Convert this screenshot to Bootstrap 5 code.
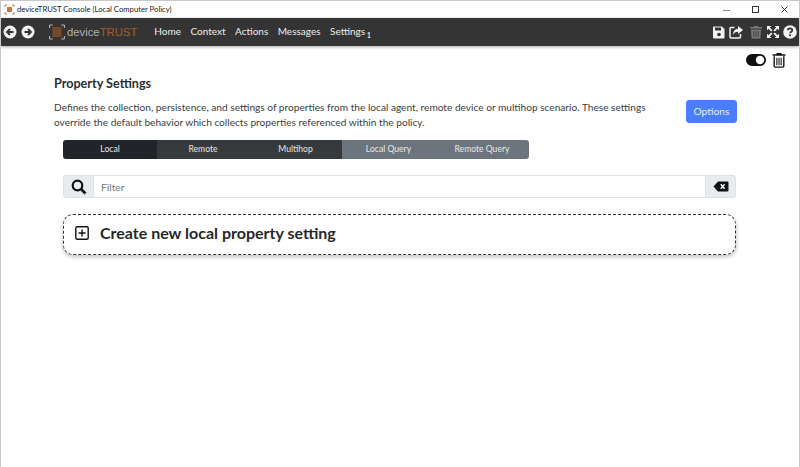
<!DOCTYPE html>
<html lang="en">
<head>
<meta charset="utf-8">
<title>deviceTRUST Console</title>
<link href="https://cdn.jsdelivr.net/npm/bootstrap@5.3.0/dist/css/bootstrap.min.css" rel="stylesheet">
<style>
html,body{height:467px;overflow:hidden;background:#fff}
body{font-family:Lato,"Open Sans",sans-serif;color:#212529;border-left:1px solid #c9c9c9;border-right:1px solid #c9c9c9}
.win-bar{height:18px;font-size:7.700px;line-height:17px;color:#222;padding-left:3px;border-top:1px solid #c9c9c9}
.win-bar .ttl{margin-left:2px}
.win-btn{width:29px;height:17px}
.top-bar{height:28px;background:#343434;box-shadow:0 1px 3px rgba(0,0,0,.35);padding-left:2px;padding-right:2px}
.back-btn{width:14px;height:14px;display:block}
.back-next{margin-left:4px}
.brand-box{margin-left:14px}
.brand-txt{font-size:11.300px;color:#b3b3b3;font-family:"Liberation Sans",sans-serif;margin-left:2px}
.brand-txt b{color:#a4602a;font-weight:400}
.menu-row{margin-left:17px;column-gap:9.500px}
.menu-link{color:#eee;font-size:10px;line-height:28px;text-decoration:none}
.menu-sub{font-size:6.500px;color:#eee;font-weight:700;position:relative;top:3px;margin-left:2px}
.tool-ic{width:14px;height:14px;display:block}
.tool-gap{margin-left:3px}
.tools{gap:3px}
.page-wrap{height:421px}
.corner-tools{padding:5px 13px 0 0;height:23px;gap:6px}
.head-ttl{font-size:12.600px;font-weight:700;margin:0;line-height:17px;color:#2b2f33}
.head-block{padding:6px 62px 0 53px}
.head-row{margin-top:6px}
.desc{font-size:10.150px;line-height:15px;color:#3a3e42;margin:2px 0 0;width:600px}
.opt-btn{font-size:10.200px;background:#4a7dfb;border:1px solid #4a7dfb;color:#e8eeff;height:23px;width:51px;padding:0;border-radius:3px;margin-top:-5px}
.seg-row{margin:10px 0 0 62px;width:466px;height:19px;font-size:8.600px;color:#e8e8e8;border-radius:3px;overflow:hidden}
.seg{display:flex;align-items:center;justify-content:center;height:100%}
.seg-1{width:94px;background:#212529}
.seg-2{width:92px;background:#373a3c}
.seg-3{width:93px;background:#373a3c}
.seg-4{width:93px;background:#6c757d}
.seg-5{width:94px;background:#6c757d}
.filter-wrap.input-group{margin:16px 63px 0 62px;height:23px;width:auto}
.filter-wrap .input-group-text{background:#e9ecef;border-color:#dee2e6;padding:0;justify-content:center;border-radius:3px}
.filter-l{width:31px;border-top-right-radius:0!important;border-bottom-right-radius:0!important}
.filter-r{width:31px;border-top-left-radius:0!important;border-bottom-left-radius:0!important}
.filter-in{font-size:10.300px;height:23px;min-height:23px;padding:0 7px;border-color:#dee2e6;border-radius:0}
.filter-in::placeholder{color:#6f757b}
.new-card{margin:16px 63px 0 62px;height:41px;border:1px dashed #333;border-radius:10px;box-shadow:0 2px 4px rgba(0,0,0,.25);padding:0 0 4px 11px;gap:11px;background:#fff}
.new-card span{font-size:16px;font-weight:700;color:#26292c}
</style>
</head>
<body>
<div class="win-bar d-flex align-items-center justify-content-between">
  <div class="d-flex align-items-center">
    <svg width="11" height="11" viewBox="0 0 11 11"><rect x="3" y="3" width="5" height="5" fill="#c87a3c"/><path d="M1 3V1h2M8 1h2v2M10 8v2H8M3 10H1V8" fill="none" stroke="#c0673a" stroke-width=".9"/></svg>
    <span class="ttl">deviceTRUST Console (Local Computer Policy)</span>
  </div>
  <div class="d-flex">
    <div class="win-btn d-flex align-items-center justify-content-center"><svg width="10" height="10" viewBox="0 0 10 10"><path d="M1 5.500h7" stroke="#888" stroke-width="1"/></svg></div>
    <div class="win-btn d-flex align-items-center justify-content-center"><svg width="10" height="10" viewBox="0 0 10 10"><rect x="1.500" y="1.500" width="6" height="6" fill="none" stroke="#333"/></svg></div>
    <div class="win-btn d-flex align-items-center justify-content-center"><svg width="10" height="10" viewBox="0 0 10 10"><path d="M1.500 1.500l6 6M7.500 1.500l-6 6" stroke="#333"/></svg></div>
  </div>
</div>
<nav class="top-bar d-flex align-items-center">
  <svg class="back-btn" viewBox="0 0 14 14"><circle cx="7" cy="7" r="6.500" fill="#f4f4f4"/><path d="M10.500 7H4.500M7 4L4 7l3 3" fill="none" stroke="#343434" stroke-width="1.800"/></svg>
  <svg class="back-btn back-next" viewBox="0 0 14 14"><circle cx="7" cy="7" r="6.500" fill="#f4f4f4"/><path d="M3.500 7h6M7 4l3 3-3 3" fill="none" stroke="#343434" stroke-width="1.800"/></svg>
  <div class="d-flex align-items-center brand-box">
    <svg width="16" height="16" viewBox="0 0 16 16"><rect x="3.500" y="3" width="9" height="10" fill="#7a4a24"/><path d="M.6 4V1h3M12.400 1h3v3M15.400 12v3h-3M3.600 15h-3v-3" fill="none" stroke="#bbb" stroke-width="1"/></svg>
    <span class="brand-txt">device<b>TRUST</b></span>
  </div>
  <div class="d-flex menu-row">
    <a class="menu-link" href="#">Home</a>
    <a class="menu-link" href="#">Context</a>
    <a class="menu-link" href="#">Actions</a>
    <a class="menu-link" href="#">Messages</a>
    <a class="menu-link" href="#">Settings<span class="menu-sub">1</span></a>
  </div>
  <div class="d-flex align-items-center tools ms-auto">
    <svg class="tool-ic" viewBox="0 0 14 14"><path d="M2 1.500h8l2.500 2.500v8.500a1 1 0 0 1-1 1h-9.500a1 1 0 0 1-1-1v-10a1 1 0 0 1 1-1z" fill="#f2f2f2"/><rect x="3" y="2.500" width="6" height="3" fill="#343434"/><circle cx="7" cy="9.500" r="1.800" fill="#343434"/></svg>
    <svg class="tool-ic" viewBox="0 0 14 14"><path d="M5.500 2.500H2a1 1 0 0 0-1 1V12a1 1 0 0 0 1 1h8.500a1 1 0 0 0 1-1V9" fill="none" stroke="#f2f2f2" stroke-width="1.500"/><path d="M9 1l5 4-5 4V6.700C6.500 6.700 5 7.500 4 10c0-4 2-6 5-6.300z" fill="#f2f2f2"/></svg>
    <svg class="tool-ic tool-gap" viewBox="0 0 14 14"><path d="M5 1h4l.6 1H13v1.500H1V2h3.400zM2 4.500h10l-.6 9H2.600z" fill="#777"/><path d="M4.800 6v6M7 6v6M9.200 6v6" stroke="#343434" stroke-width=".8"/></svg>
    <svg class="tool-ic" viewBox="0 0 14 14"><path d="M1 1h4.300L3.800 2.500l2.700 2.700-1.300 1.300-2.700-2.700L1 5.300zM13 1v4.300l-1.500-1.500-2.700 2.700-1.300-1.300 2.700-2.700L8.700 1zM1 13V8.700l1.500 1.500 2.700-2.700 1.300 1.300-2.700 2.700L5.300 13zM13 13H8.700l1.500-1.500-2.700-2.700 1.300-1.300 2.700 2.700L13 8.700z" fill="#f2f2f2"/></svg>
    <svg class="tool-ic" viewBox="0 0 14 14"><circle cx="7" cy="7" r="6.800" fill="#f2f2f2"/><path d="M4.800 5.300c0-1.300 1-2 2.300-2s2.200.8 2.200 1.900c0 1.600-2.100 1.600-2.100 3.100" fill="none" stroke="#343434" stroke-width="1.700"/><rect x="6.100" y="9.300" width="1.800" height="1.800" fill="#343434"/></svg>
  </div>
</nav>
<main class="page-wrap">
  <div class="corner-tools d-flex justify-content-end align-items-center">
    <svg width="20" height="12" viewBox="0 0 20 12"><rect width="20" height="12" rx="6" fill="#111"/><circle cx="14" cy="6" r="4.200" fill="#fff"/></svg>
    <svg width="14" height="16" viewBox="0 0 13 15"><path d="M4.500 1h4l.7 1.200H12.500v1.300H.5V2.200h3.300z" fill="#111"/><path d="M2 4v9.200a1 1 0 0 0 1 1h7a1 1 0 0 0 1-1V4" fill="none" stroke="#111" stroke-width="1.300"/><path d="M4.500 5.500v7M6.500 5.500v7M8.500 5.500v7" stroke="#111"/></svg>
  </div>
  <div class="head-block">
    <h1 class="head-ttl">Property Settings</h1>
    <div class="d-flex justify-content-between align-items-center head-row">
      <p class="desc">Defines the collection, persistence, and settings of properties from the local agent, remote device or multihop scenario. These settings override the default behavior which collects properties referenced within the policy.</p>
      <button class="btn opt-btn" type="button">Options</button>
    </div>
  </div>
  <div class="seg-row d-flex">
    <div class="seg seg-1">Local</div>
    <div class="seg seg-2">Remote</div>
    <div class="seg seg-3">Multihop</div>
    <div class="seg seg-4">Local Query</div>
    <div class="seg seg-5">Remote Query</div>
  </div>
  <div class="input-group filter-wrap flex-nowrap">
    <span class="input-group-text filter-l"><svg width="16" height="16" viewBox="0 0 16 16"><circle cx="6.500" cy="6.500" r="4.800" fill="none" stroke="#111" stroke-width="2.200"/><path d="M10.200 10.200L14.500 14.500" stroke="#111" stroke-width="2.800"/></svg></span>
    <input class="form-control filter-in" type="text" placeholder="Filter">
    <span class="input-group-text filter-r"><svg width="16" height="11" viewBox="0 0 16 11"><path d="M5 .5h9.500a1 1 0 0 1 1 1v8a1 1 0 0 1-1 1H5L.5 5.500z" fill="#111"/><path d="M7.800 3.300l3.800 4.400M11.600 3.300L7.800 7.700" stroke="#fff" stroke-width="1.400"/></svg></span>
  </div>
  <div class="new-card d-flex align-items-center">
    <svg width="14" height="14" viewBox="0 0 14 14"><rect x=".8" y=".8" width="12.400" height="12.400" rx="1.300" fill="none" stroke="#111" stroke-width="1.400"/><path d="M7 3.500v7M3.500 7h7" stroke="#111" stroke-width="1.400"/></svg>
    <span>Create new local property setting</span>
  </div>
</main>
<script src="https://cdn.jsdelivr.net/npm/bootstrap@5.3.0/dist/js/bootstrap.bundle.min.js"></script>
</body>
</html>
